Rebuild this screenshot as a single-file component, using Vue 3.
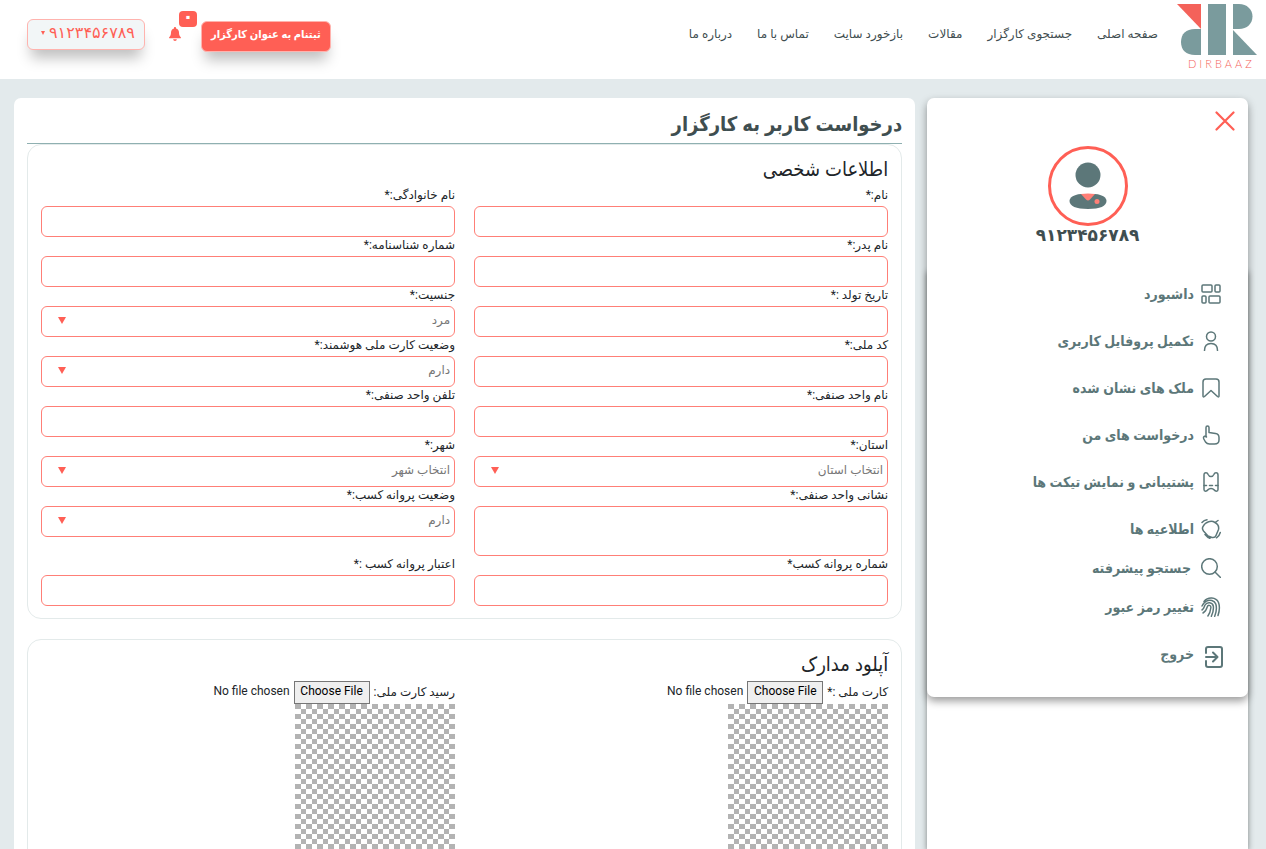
<script setup>
const navLinks = ['صفحه اصلی', 'جستجوی کارگزار', 'مقالات', 'بازخورد سایت', 'تماس با ما', 'درباره ما']

const phone = '۹۱۲۳۴۵۶۷۸۹'

const menu = [
  { icon: 'dashboard', label: 'داشبورد' },
  { icon: 'user', label: 'تکمیل پروفایل کاربری' },
  { icon: 'bookmark', label: 'ملک های نشان شده' },
  { icon: 'hand', label: 'درخواست های من' },
  { icon: 'ticket', label: 'پشتیبانی و نمایش تیکت ها' },
  { icon: 'alert', label: 'اطلاعیه ها' },
  { icon: 'search', label: 'جستجو پیشرفته', tight: true },
  { icon: 'finger', label: 'تغییر رمز عبور' },
  { icon: 'exit', label: 'خروج' }
]

const fields = [
  { id: 'first-name', label: 'نام:*' },
  { id: 'last-name', label: 'نام خانوادگی:*' },
  { id: 'father', label: 'نام پدر:*' },
  { id: 'birth-cert', label: 'شماره شناسنامه:*' },
  { id: 'birth-date', label: 'تاریخ تولد :*' },
  { id: 'gender', label: 'جنسیت:*', options: ['مرد', 'زن'] },
  { id: 'national-code', label: 'کد ملی:*' },
  { id: 'smart-card', label: 'وضعیت کارت ملی هوشمند:*', options: ['دارم', 'ندارم'] },
  { id: 'shop-name', label: 'نام واحد صنفی:*' },
  { id: 'shop-phone', label: 'تلفن واحد صنفی:*' },
  { id: 'province', label: 'استان:*', options: ['انتخاب استان'] },
  { id: 'city', label: 'شهر:*', options: ['انتخاب شهر'] },
  { id: 'address', label: 'نشانی واحد صنفی:*', area: true },
  { id: 'license-state', label: 'وضعیت پروانه کسب:*', options: ['دارم', 'ندارم'] },
  { id: 'license-no', label: 'شماره پروانه کسب*' },
  { id: 'license-date', label: 'اعتبار پروانه کسب :*' }
]

const uploads = [
  { id: 'card-file', label: 'کارت ملی :*' },
  { id: 'receipt-file', label: 'رسید کارت ملی:' }
]
</script>

<template>
  <div class="page" dir="rtl">
    <header class="topbar">
      <a class="logo" href="#" aria-label="DIRBAAZ">
        <svg width="80" height="66" viewBox="0 0 80 66">
          <path d="M0 0H24V25Z" fill="#f4625a" />
          <path d="M24 25V51H18C9 51 4 46 4 38S9 25 18 25Z" fill="#7a9b9d" />
          <path d="M31 0H49V51H31Z" fill="#7a9b9d" />
          <path d="M56 0H62C70 0 75.500 5.500 75.500 12.500S70 25 62 25H56Z" fill="#7a9b9d" />
          <path d="M56 26L80 51H56Z" fill="#7a9b9d" />
          <text class="wordmark" x="11" y="64">DIRBAAZ</text>
        </svg>
      </a>
      <nav class="nav">
        <a v-for="l in navLinks" :key="l" href="#">{{ l }}</a>
      </nav>
      <div class="actions">
        <button class="btn signup" type="button">ثبتنام به عنوان کارگزار</button>
        <button class="bell" type="button" aria-label="اعلان ها">
          <svg width="12" height="14" viewBox="0 0 12 14" fill="#ff5f55">
            <path d="M6 0C6.600 0 7 .4 7 1V1.500C9 2 10 3.600 10 5.500C10 8 10.600 9 11.600 10C12.200 10.600 11.900 11.300 11.200 11.300H.8C.1 11.300-.2 10.600.4 10C1.400 9 2 8 2 5.500C2 3.600 3 2 5 1.500V1C5 .4 5.400 0 6 0Z" />
            <path d="M4.200 12.200H7.800C7.700 13.200 7 13.900 6 13.900S4.300 13.200 4.200 12.200Z" />
          </svg>
          <span class="badge">۰</span>
        </button>
        <button class="btn account" type="button"><span>{{ phone }}</span><i class="caret"></i></button>
      </div>
    </header>

    <div class="content">
      <aside class="side">
        <div class="card">
          <button class="close" type="button" aria-label="بستن">
            <svg width="20" height="20" viewBox="0 0 20 20" fill="none" stroke="#ff5f55" stroke-width="2.200" stroke-linecap="round"><path d="M1.500 1.500L18.500 18.500M18.500 1.500L1.500 18.500" /></svg>
          </button>
          <div class="avatar">
            <svg width="38" height="48" viewBox="0 0 38 48">
              <circle cx="19" cy="13" r="12.500" fill="#5c7779" />
              <path d="M12 32C4 32.500.5 36 .5 39C.5 44 7 47 19 47S37.500 44 37.500 39C37.500 36 34 32.500 26 32Z" fill="#5c7779" />
              <path d="M12 32Q19 31 26 32L21 37.500Q19 39.500 17 37.500Z" fill="#ff7f77" />
              <circle cx="28" cy="39.500" r="2.500" fill="#ff7f77" />
            </svg>
          </div>
          <p class="phone">{{ phone }}</p>
          <ul class="menu">
            <li v-for="m in menu" :key="m.icon" :class="{ tight: m.tight }">
              <a href="#">
                <svg v-if="m.icon === 'dashboard'" viewBox="0 0 20 20"><rect x="1" y="1" width="10" height="7" rx="1" /><rect x="14" y="1" width="5" height="7" rx="1" /><rect x="1" y="12" width="4" height="7" rx="1" /><rect x="8" y="12" width="11" height="7" rx="1" /></svg>
                <svg v-else-if="m.icon === 'user'" viewBox="0 0 20 20"><circle cx="10" cy="5.500" r="4.500" /><path d="M3.500 19.500C3.500 15 6 12.500 10 12.500S16.500 15 16.500 19.500" /></svg>
                <svg v-else-if="m.icon === 'bookmark'" viewBox="0 0 20 20"><path d="M2 18V4Q2 1 5 1H15Q18 1 18 4V18Q18 19.500 16.500 18.500L10 12.500L3.500 18.500Q2 19.500 2 18Z" /></svg>
                <svg v-else-if="m.icon === 'hand'" viewBox="0 0 20 20"><path d="M5 12V2.500Q5 1 6.500 1T8 2.500V7.500L14.500 8.500Q18 9 18 12.500V15Q18 19 13.500 19H8.500Q6 19 4.500 17L2.800 14Q2 12 3.500 11.200Q5 10.500 5.500 12" /></svg>
                <svg v-else-if="m.icon === 'ticket'" viewBox="0 0 20 20"><path d="M3 17.500V3Q3 .8 5 .8Q6.500 .8 7 2.200Q8 4.500 10 4.500T13 2.200Q13.500 .8 15 .8Q17 .8 17 3V17.500Q17 19.200 15.500 19.200T13 17.800Q12 16.500 10 16.500T7 17.800Q6 19.200 4.500 19.200T3 17.500Z" /><path d="M3 13.500H5.500M8.500 13.500H11.500M14.500 13.500H17" /></svg>
                <svg v-else-if="m.icon === 'alert'" viewBox="0 0 20 20"><path d="M5 4Q10 1 14 3.500Q18.500 6 17.500 10.500L15 16.500Q14 19 11 18.500L7 17L2.500 12Q.5 9.500 2.300 7Q3.500 5 5 4ZM14 3.500L17 1.500M1 3.500Q3 1.200 6 .8M7 17Q7 19.300 9 19.300M15.500 18.800Q18.500 17 19.300 13.500M4 15.500L7 18.500" /></svg>
                <svg v-else-if="m.icon === 'search'" viewBox="0 0 20 20"><circle cx="8.500" cy="8.500" r="7.800" /><path d="M14 14L19.500 19.500" /></svg>
                <svg v-else-if="m.icon === 'finger'" viewBox="0 0 20 20"><path d="M3 4.500C7-.5 15 0 17.500 5.500C18.800 9 18.500 14 17 18.500M1 9C2 7 3 5.500 5 4.300C9 2 13.500 3.500 14.800 7C16 11 15 16 13.700 19.300M1 13C3 12 3 10 4 8C6 4.500 11.500 5 12.300 9C12.800 13 11.500 17 10.300 19.300M2 16C5 14.500 5.500 12.500 6.200 10C7 7.500 10 8 9.900 10.500C9.500 14 8.500 17 6.900 19" /></svg>
                <svg v-else class="exit" viewBox="-3 -3 20 24"><path d="M2 8V4Q2 2 4 2H16Q18 2 18 4V20Q18 22 16 22H4Q2 22 2 20V16M2 12H13M9 7.500L13.500 12L9 16.500" /></svg>
                <span>{{ m.label }}</span>
              </a>
            </li>
          </ul>
        </div>
      </aside>

      <main class="panel">
        <h1>درخواست کاربر به کارگزار</h1>
        <section class="box">
          <h2>اطلاعات شخصی</h2>
          <div class="grid fields">
            <div v-for="f in fields" :key="f.id" class="field">
              <label :for="f.id">{{ f.label }}</label>
              <textarea v-if="f.area" :id="f.id"></textarea>
              <div v-else-if="f.options" class="pick">
                <select :id="f.id"><option v-for="o in f.options" :key="o">{{ o }}</option></select>
                <i class="arrow"></i>
              </div>
              <input v-else :id="f.id" type="text">
            </div>
          </div>
        </section>
        <section class="box">
          <h2>آپلود مدارک</h2>
          <div class="grid">
            <div v-for="u in uploads" :key="u.id">
              <div class="upload">
                <label :for="u.id">{{ u.label }}</label>
                <input :id="u.id" type="file">
              </div>
              <div class="preview" role="img" :aria-label="u.label"></div>
            </div>
          </div>
        </section>
      </main>
    </div>
  </div>
</template>

<style>
body { background: #e3eaec; }
</style>

<style scoped>
* { box-sizing: border-box; }
.page {
  height: 100vh;
  overflow: hidden;
  display: flex;
  flex-direction: column;
  background: #e3eaec;
  color: #212529;
  font-family: Roboto, "DejaVu Sans", sans-serif;
  font-size: 12px;
}
a { color: inherit; text-decoration: none; }
button { font: inherit; cursor: pointer; }
h1, h2, p, ul { margin: 0; padding: 0; }

.topbar {
  flex: none;
  display: flex;
  align-items: flex-start;
  height: 79px;
  padding: 0 9px 0 27px;
  background: #fff;
}
.logo { height: 66px; margin-top: 4px; }
.logo svg { overflow: visible; }
.wordmark { font-family: Lato, sans-serif; font-size: 11px; font-weight: 300; letter-spacing: 3px; fill: #f4625a; direction: ltr; }
.nav { display: flex; gap: 25px; margin: 24px 19px 0 0; line-height: 20px; color: #3f4e50; }
.actions { display: flex; align-items: flex-start; margin-right: auto; }
.btn {
  height: 31px;
  border: 1px solid #ffb3ae;
  border-radius: 6px;
  box-shadow: 0 12px 14px -4px rgba(0, 0, 0, .25);
  white-space: nowrap;
}
.signup, h1, h2, .menu { font-family: Roboto, "DejaVu Sans Condensed", "DejaVu Sans", sans-serif; }
.signup { margin-top: 21px; padding: 0 9px 4px; background: #ff5f55; color: #fff; font-weight: bold; font-size: 11px; }
.account { display: flex; align-items: center; gap: 4px; margin-top: 19px; padding: 0 9px 4px 13px; background: #f2f6f7; color: #ff5f55; font-size: 16px; }
.caret { border: 2px solid transparent; border-top: 4px solid #ff5f55; border-bottom: 0; }
.bell { position: relative; width: 12px; height: 14px; margin: 27px 20px 0 24px; padding: 0; border: 0; background: none; }
.bell svg { display: block; }
.badge {
  position: absolute;
  left: 10px;
  top: -16px;
  width: 18px;
  height: 16px;
  border-radius: 4px;
  background: #ff5f55;
  color: #fff;
  font-size: 18px;
  font-weight: bold;
  line-height: 12px;
  text-align: center;
}

.content { flex: 1; display: flex; gap: 12px; padding: 19px 18px 0 14px; min-height: 0; }
.side { flex: 0 0 26%; position: relative; }
.side::before {
  content: "";
  position: absolute;
  inset: 172px 0 0;
  background: #fff;
  box-shadow: 0 2px 6px rgba(0, 0, 0, .45);
}
.card {
  position: relative;
  padding: 13px 13px 20px;
  border-radius: 7px;
  background: #fff;
  box-shadow: 0 4px 8px rgba(0, 0, 0, .4);
}
.close { display: block; height: 20px; padding: 0; border: 0; background: none; }
.close svg { display: block; }
.avatar {
  display: flex;
  justify-content: center;
  align-items: center;
  width: 80px;
  height: 80px;
  margin: 15px auto 0;
  border: 3px solid #ff5f55;
  border-radius: 50%;
}
.phone { font-size: 17px; font-weight: bold; line-height: 18px; text-align: center; color: #3f4e50; }
.menu { list-style: none; margin-top: 26px; padding: 0 14px; color: #5c7779; font-size: 14px; font-weight: bold; }
.menu li { height: 47px; }
.menu .tight { height: 31px; }
.menu .tight span { margin-right: 3px; }
.menu a { display: flex; align-items: center; gap: 7px; height: 100%; }
.menu svg { width: 20px; height: 20px; fill: none; stroke: #5c7779; stroke-width: 1.500; stroke-linecap: round; stroke-linejoin: round; }
.menu .exit { height: 24px; overflow: visible; stroke-width: 2; }

.panel { flex: 1; min-width: 0; padding: 0 13px; border-radius: 7px 7px 0 0; background: #fff; }
h1 {
  height: 46px;
  padding-top: 9px;
  border-bottom: 1px solid #8fb0b1;
  color: #3f4e50;
  font-size: 20px;
  line-height: 34px;
  font-weight: bold;
}
.box { margin-bottom: 20px; padding: 10px 13px 12px; border: 1px solid #e3eaea; border-radius: 14px; }
h2 { height: 31px; font-size: 20px; font-weight: normal; line-height: 28px; }
.grid { display: grid; grid-template-columns: 1fr 1fr; column-gap: 19px; }
.fields { padding-top: 1px; }
.field label { display: block; height: 19px; line-height: 16px; }
input[type="text"], select, textarea {
  display: block;
  width: 100%;
  height: 31px;
  border: 1px solid #ff7f77;
  border-radius: 6px;
  padding: 0 4px 3px;
  background: #fff;
  color: #777;
  font: inherit;
  appearance: none;
  outline: 0;
}
textarea { height: 50px; resize: none; }
.pick { position: relative; }
.arrow {
  position: absolute;
  left: 17px;
  top: 11px;
  border: 4px solid transparent;
  border-top: 7px solid #ff5f55;
  border-bottom: 0;
  pointer-events: none;
}
.upload { display: flex; align-items: center; gap: 4px; height: 23px; }
.upload label { line-height: 19px; }
.upload input { width: 200px; height: 23px; font: inherit; }
.upload input::file-selector-button {
  width: 76px;
  height: 23px;
  margin: 0;
  margin-inline-end: 4px;
  padding: 0 0 3px;
  border: 1px solid #767676;
  background: #efefef;
  color: #000;
  font: inherit;
}
.preview {
  width: 160px;
  height: 160px;
  background: conic-gradient(at 6px 5px, #fff 25%, #b3b3b3 0 50%, #fff 0 75%, #b3b3b3 0) 0 0 / 11px 10px;
}
</style>
